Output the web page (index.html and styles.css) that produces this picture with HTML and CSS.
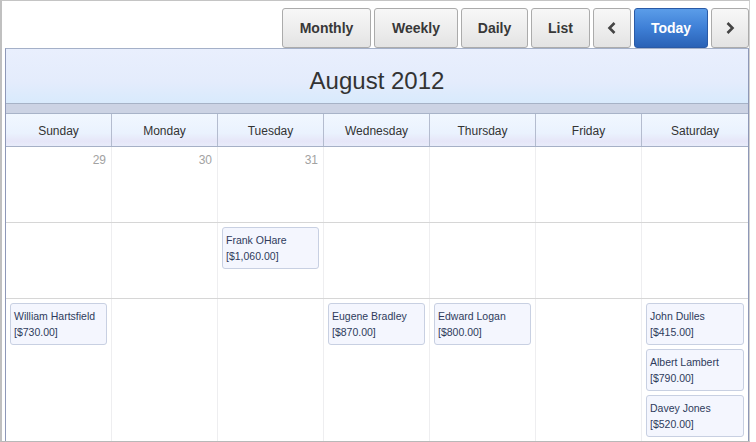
FILE: index.html
```html
<!DOCTYPE html>
<html>
<head>
<meta charset="utf-8">
<link rel="stylesheet" href="styles.css">
</head>
<body>
<div class="frame">
  <div class="toolbar">
    <button class="btn w-month">Monthly</button>
    <button class="btn w-week">Weekly</button>
    <button class="btn w-day">Daily</button>
    <button class="btn w-list">List</button>
    <button class="btn arrow"><svg width="10" height="14" viewBox="0 0 10 14"><polyline points="7.5,2 2.5,7 7.5,12" fill="none" stroke="#444" stroke-width="2.6"/></svg></button>
    <button class="btn today">Today</button>
    <button class="btn arrow"><svg width="10" height="14" viewBox="0 0 10 14"><polyline points="2.5,2 7.5,7 2.5,12" fill="none" stroke="#444" stroke-width="2.6"/></svg></button>
  </div>
  <div class="cal">
    <div class="cal-head">August 2012</div>
    <div class="strip"></div>
    <div class="weekdays">
      <div>Sunday</div><div>Monday</div><div>Tuesday</div><div>Wednesday</div><div>Thursday</div><div>Friday</div><div>Saturday</div>
    </div>
    <div class="week">
      <div class="cell"><div class="num">29</div></div>
      <div class="cell"><div class="num">30</div></div>
      <div class="cell"><div class="num">31</div></div>
      <div class="cell"></div>
      <div class="cell"></div>
      <div class="cell"></div>
      <div class="cell"></div>
    </div>
    <div class="week">
      <div class="cell"></div>
      <div class="cell"></div>
      <div class="cell"><div class="ev">Frank OHare<br>[$1,060.00]</div></div>
      <div class="cell"></div>
      <div class="cell"></div>
      <div class="cell"></div>
      <div class="cell"></div>
    </div>
    <div class="week last">
      <div class="cell"><div class="ev">William Hartsfield<br>[$730.00]</div></div>
      <div class="cell"></div>
      <div class="cell"></div>
      <div class="cell"><div class="ev">Eugene Bradley<br>[$870.00]</div></div>
      <div class="cell"><div class="ev">Edward Logan<br>[$800.00]</div></div>
      <div class="cell"></div>
      <div class="cell"><div class="ev">John Dulles<br>[$415.00]</div><div class="ev">Albert Lambert<br>[$790.00]</div><div class="ev">Davey Jones<br>[$520.00]</div></div>
    </div>
  </div>
</div>
</body>
</html>
```

FILE: styles.css
```css
html, body {
  margin: 0;
  padding: 0;
  background: #fff;
  font-family: "Liberation Sans", Arial, sans-serif;
}
.frame {
  width: 750px;
  height: 442px;
  box-sizing: border-box;
  border-top: 1px solid #c4c4c4;
  border-bottom: 1px solid #b8b8b8;
  border-left: 2px solid #c0c0c0;
  border-right: 1px solid #d0d0d0;
  overflow: hidden;
}
.toolbar {
  display: flex;
  justify-content: flex-end;
  gap: 3px;
  padding-top: 7px;
  height: 40px;
}
.btn {
  height: 40px;
  box-sizing: border-box;
  padding: 0;
  margin: 0;
  border: 1px solid #ababab;
  border-radius: 3px;
  background: linear-gradient(#f7f7f7 0%, #eeeeee 50%, #e3e3e3 100%);
  font-family: "Liberation Sans", Arial, sans-serif;
  font-weight: bold;
  font-size: 14px;
  color: #383838;
  display: flex;
  align-items: center;
  justify-content: center;
}
.w-month { width: 89px; }
.w-week { width: 84px; }
.w-day { width: 67px; }
.w-list { width: 59px; }
.btn.arrow { width: 38px; }
.btn.today {
  width: 74px;
  background: linear-gradient(#5b9de9 0%, #3e7fd6 50%, #2a62b6 100%);
  border-color: #2a5aa6;
  color: #fff;
}
.cal {
  margin-left: 3px;
  width: 744px;
  box-sizing: border-box;
  border: 1px solid #8e98b8;
  border-top-color: #a4b0c8;
}
.cal-head {
  height: 55px;
  box-sizing: border-box;
  padding-top: 20px;
  line-height: 24px;
  font-size: 24px;
  color: #333;
  text-align: center;
  background: linear-gradient(#e9effd 0%, #e4ecfc 60%, #d8eafc 100%);
  border-bottom: 1px solid #a6b2c6;
}
.strip {
  height: 9px;
  background: #ccd3e4;
  border-bottom: 1px solid #a8b3c8;
}
.weekdays {
  display: grid;
  grid-template-columns: repeat(7, 106px);
  border-bottom: 1px solid #a6b0c6;
  background: linear-gradient(#f1f7ff 0%, #eaf2fe 60%, #e6e6f8 85%, #e8ecfa 100%);
}
.weekdays div {
  height: 32px;
  box-sizing: border-box;
  padding-top: 2px;
  line-height: 30px;
  font-size: 12px;
  color: #333;
  text-align: center;
  border-right: 1px solid #b4bccf;
}
.weekdays div:last-child {
  border-right: none;
}
.week {
  display: grid;
  grid-template-columns: repeat(7, 106px);
  height: 76px;
  box-sizing: border-box;
  border-bottom: 1px solid #d6d6d6;
}
.week.last {
  height: 160px;
  border-bottom: none;
}
.cell {
  border-right: 1px solid #eeeef0;
  padding: 4px 4px 0 4px;
  display: flex;
  flex-direction: column;
  gap: 4px;
}
.cell:last-child {
  border-right: none;
}
.num {
  padding-top: 2px;
  padding-right: 1px;
  text-align: right;
  font-size: 12px;
  line-height: 14px;
  color: #a2a2a2;
}
.ev {
  height: 42px;
  box-sizing: border-box;
  border: 1px solid #c8d0e2;
  border-radius: 3px;
  background: #f4f6fe;
  padding: 4px 3px 4px 3px;
  font-size: 10.5px;
  line-height: 16px;
  color: #2e3b5c;
  white-space: nowrap;
}
```
